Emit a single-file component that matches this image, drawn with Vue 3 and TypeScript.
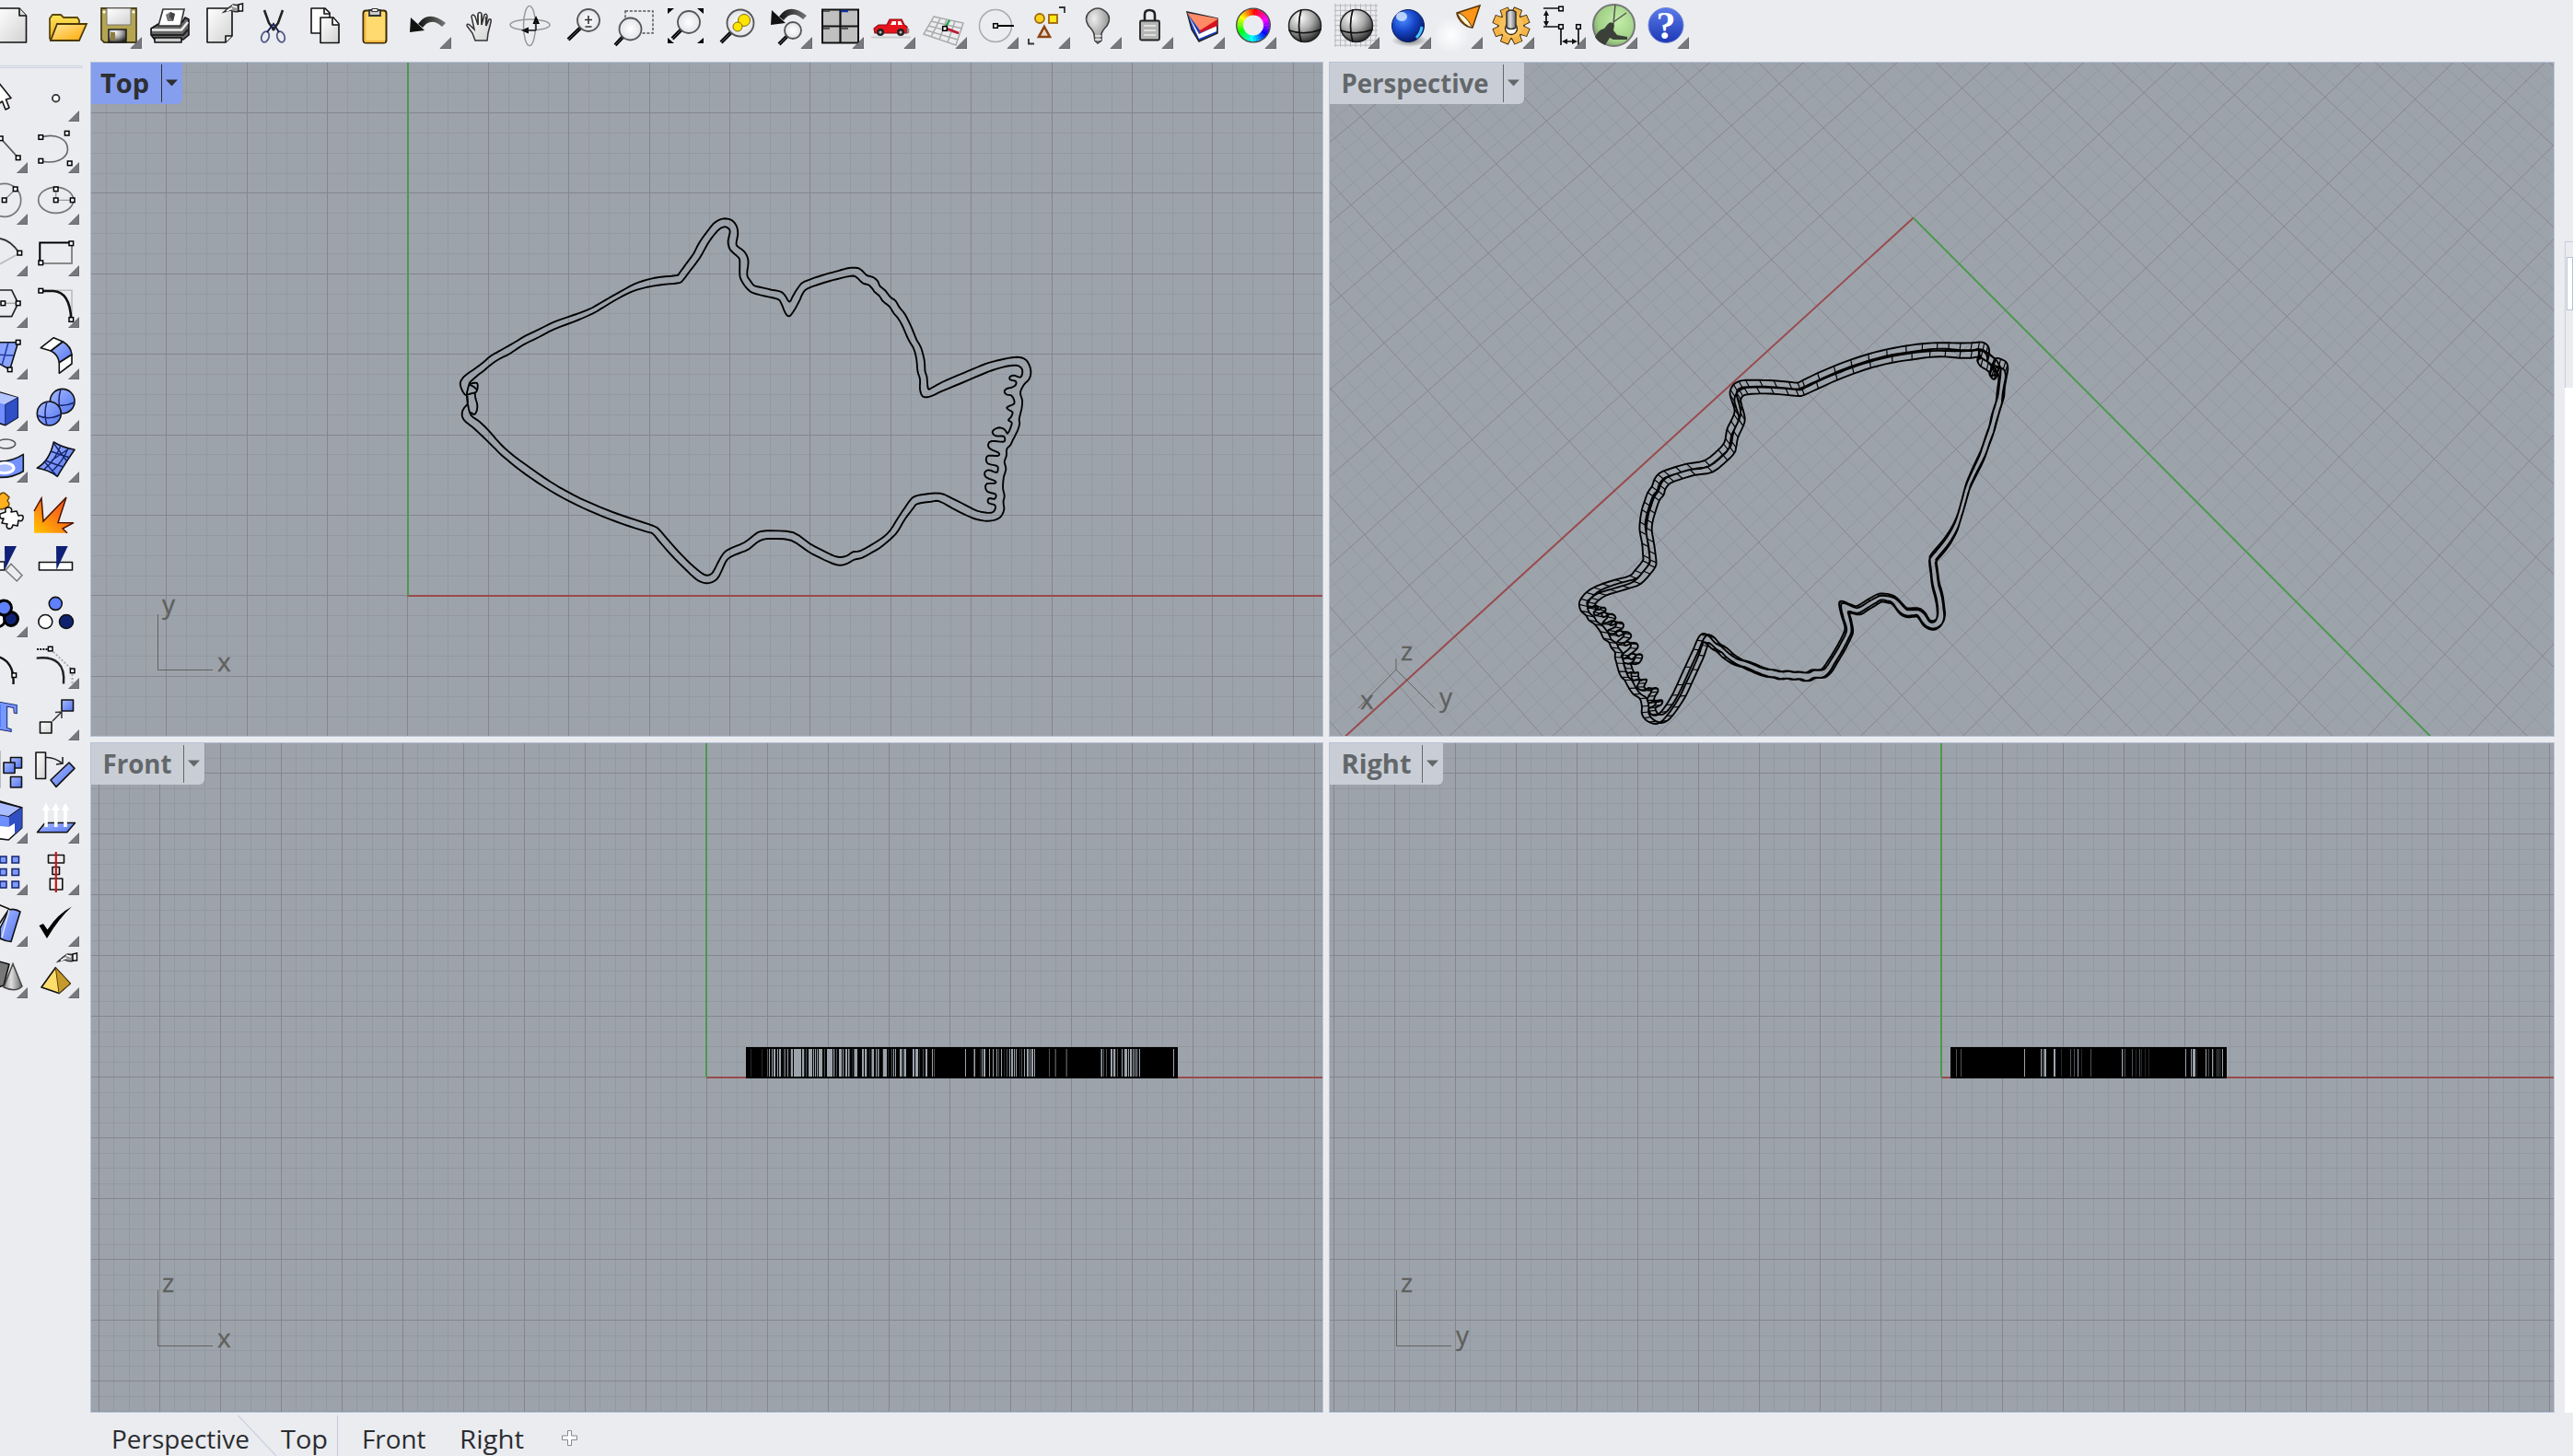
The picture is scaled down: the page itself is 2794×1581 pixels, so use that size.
<script setup lang="ts">
type Pt = [number, number]

interface Axis { lines: string; labels: { t: string; x: number; y: number }[] }
interface View {
  name: string
  active: boolean
  box: string
  minor: string
  major: string
  red: string
  green: string
  outline: string
  iso: string
  width: number
  textLen: number
  axis: Axis
  bars: { x: number; w: number; o: number }[]
  body: { x: number; w: number } | null
}

/* ---------- fish outline (sheet units: 2.3758 across, 3 down per pixel) ---------- */
const outerRaw = `60,627 52,612 47,592 50,578 60,563 80,545 105,522 125,500 150,482 185,457 215,434 250,413 290,388 340,366 380,347 402,332 430,311 460,290 495,266 530,251 560,243 605,237 612,230 630,199 648,168 660,139 672,115 688,88 700,69 714,57 729,52 745,56 756,68 762,85 763,105 759,135 766,146 780,160 788,178 790,198 787,235 794,252 805,270 820,275 850,284 873,290 884,301 896,323 905,305 918,278 930,261 950,250 985,235 1020,223 1050,213 1072,213 1084,222 1096,237 1112,243 1124,256 1130,272 1144,287 1156,307 1170,320 1180,341 1193,361 1204,387 1216,421 1224,446 1234,468 1240,490 1245,520 1246,548 1251,570 1254,606 1264,603 1290,585 1330,563 1370,542 1405,524 1440,512 1470,505 1490,504 1506,512 1516,532 1519,556 1514,576 1502,592 1492,618 1497,645 1495,672 1489,705 1490,720 1485,742 1474,770 1466,790 1457,803 1456,825 1451,845 1455,868 1449,895 1447,930 1451,955 1448,975 1450,1000 1442,1022 1428,1033 1405,1037 1380,1032 1355,1020 1320,998 1283,973 1262,974 1227,981 1216,995 1195,1030 1176,1070 1158,1095 1130,1124 1110,1139 1084,1157 1064,1163 1045,1176 1027,1181 1008,1176 975,1157 945,1137 900,1100 850,1095 827,1098 812,1108 790,1130 765,1143 745,1154 733,1168 723,1195 713,1220 702,1233 685,1240 667,1235 650,1221 620,1185 590,1146 560,1103 543,1078 528,1072 480,1053 430,1030 380,1004 330,974 280,939 230,898 190,861 155,824 130,793 105,762 80,733 62,715 53,700 52,682 58,667 66,655 65,630`
const innerRaw = `72,585 90,565 110,545 130,524 150,508 175,492 210,463 250,438 290,412 340,388 388,362 420,338 455,312 490,290 530,275 570,267 610,262 622,252 640,222 665,180 685,135 700,108 715,87 728,79 738,83 743,95 738,125 741,148 750,162 764,178 768,190 768,235 773,255 785,277 800,293 830,304 865,314 875,328 886,360 895,370 905,358 920,325 930,298 943,280 985,261 1020,249 1055,239 1068,242 1085,262 1100,268 1110,280 1116,291 1128,304 1138,322 1154,338 1165,360 1176,376 1188,402 1198,432 1208,457 1217,476 1224,510 1227,550 1233,575 1233,608 1238,628 1247,634 1265,629 1290,614 1340,588 1390,561 1420,546 1450,535 1475,530 1489,533 1497,545 1496,562 1490,569 1475,563 1465,568 1466,577 1480,582 1480,594 1470,602 1457,606 1451,615 1456,625 1468,628 1475,640 1476,655 1466,661 1457,668 1462,675 1472,683 1468,698 1461,709 1470,717 1466,735 1459,752 1452,740 1440,733 1426,738 1420,748 1428,760 1448,761 1452,770 1448,779 1418,777 1409,788 1414,802 1436,815 1434,825 1412,824 1404,832 1408,850 1432,858 1434,870 1430,879 1410,871 1400,880 1404,895 1427,907 1426,914 1406,916 1402,928 1408,942 1428,950 1426,965 1412,963 1408,972 1412,980 1426,985 1427,998 1420,1009 1405,1010 1380,1004 1350,985 1317,964 1285,947 1245,950 1222,956 1210,966 1195,992 1175,1030 1157,1066 1140,1088 1115,1109 1080,1134 1060,1138 1045,1150 1027,1155 1010,1150 985,1135 950,1112 907,1075 850,1069 820,1072 805,1083 780,1107 745,1126 728,1140 715,1165 703,1195 695,1209 683,1214 668,1205 640,1175 610,1137 580,1094 560,1065 545,1053 500,1034 440,1008 390,982 340,953 280,910 230,866 185,825 150,785 120,742 95,712 75,693 67,660 64,625 68,600 72,585`
const mouthRaw = [
  '60,627 75,622 88,617 92,600 90,588 80,588 72,593 82,600 90,610',
  '85,618 86,635 91,660 89,680 83,690 74,683',
]

const parse = (s: string): Pt[] => s.split(' ').map((p) => {
  const [a, b] = p.split(',').map(Number)
  return [480 + a / 2.3758, 220 + b / 3]
})

/** Catmull-Rom subdivision keeps the traced curve smooth. */
function smooth(p: Pt[], n = 3): Pt[] {
  const out: Pt[] = []
  for (let i = 0; i < p.length - 1; i++) {
    const a = p[Math.max(0, i - 1)], b = p[i], c = p[i + 1], d = p[Math.min(p.length - 1, i + 2)]
    for (let k = 0; k < n; k++) {
      const t = k / n, t2 = t * t, t3 = t2 * t
      const f = (j: 0 | 1) => 0.5 * (2 * b[j] + (c[j] - a[j]) * t + (2 * a[j] - 5 * b[j] + 4 * c[j] - d[j]) * t2 + (3 * b[j] - a[j] - 3 * c[j] + d[j]) * t3)
      out.push([f(0), f(1)])
    }
  }
  out.push(p[p.length - 1])
  return out
}
const toPath = (p: Pt[]) => 'M' + p.map((q) => q[0].toFixed(1) + ' ' + q[1].toFixed(1)).join('L')

const rawCurves = [outerRaw, innerRaw, ...mouthRaw].map(parse)
const curves = rawCurves.map((c) => smooth(c))

/* ---------- parallel views ---------- */
function ortho(ox: number, oy: number, step: number, x0: number, y0: number, x1: number, y1: number) {
  let minor = '', major = ''
  const q = step / 4
  for (let i = Math.ceil((x0 - ox) / q); ox + i * q < x1; i++) {
    const s = `M${Math.floor(ox + i * q) + 0.5} ${y0}V${y1}`
    if (i % 4) minor += s; else major += s
  }
  for (let i = Math.ceil((y0 - oy) / q); oy + i * q < y1; i++) {
    const s = `M${x0} ${Math.floor(oy + i * q) + 0.5}H${x1}`
    if (i % 4) minor += s; else major += s
  }
  return { minor, major }
}

/* ---------- perspective view ---------- */
function project(u: number, v: number, z = 0): Pt {
  const d = 1 - 0.00733 * u - 0.0062 * v - 0.0468 * z
  return [(-66.92 * u + 36.5 * v - 97.2 * z + 2077.7) / d, (45.44 * u + 48.05 * v - 34.6 * z + 236.6) / d]
}
const lift = (p: Pt, z: number): Pt => project((p[0] - 442.5) / 87.4, (646.6 - p[1]) / 87.4, z)
function perspGrid() {
  let minor = '', major = ''
  for (let i = -120; i <= 80; i++) {
    const a = toPath([project(i / 4, -30), project(i / 4, 20)])
    const b = toPath([project(-30, i / 4), project(20, i / 4)])
    if (i % 4) minor += a + b; else major += a + b
  }
  return { minor, major }
}
const perspOutline = curves.map((c) => toPath(c.map((p) => lift(p, 0))) + toPath(c.map((p) => lift(p, 0.5)))).join('')
const perspIso = rawCurves.map((c) => c.map((p) => toPath([lift(p, 0), lift(p, 0.5)])).join('')).join('')

/* ---------- side views: gaps between the vertical wall edges ---------- */
const shade: Record<string, number> = { d: 0.25, g: 0.5, '': 1 }
function gaps(s: string, base: number) {
  return s.split(' ').map((t) => {
    const m = /^(\d+)(?:x(\d))?([dg]?)$/.exec(t)!
    return { x: base + +m[1], w: +(m[2] || 1), o: shade[m[3]] }
  })
}
const frontBars = gaps('5d 17d 23g 25 28 30x2 34 36x2 41x2g 43d 45 48d 49x2 52x8 61x2 63d 65g 68x4 73 75 77 79x4 85g 88x6 95 96d 98g 101x3 105 108x2 111 112g 115d 117g 118x3 126x2 129x2 131d 134d 136g 137x2 141 143 144g 148d 149x4 154d 158g 160 162 167x2 169g 170d 171g 172x2 181x2 184x3 188d 192g 195x2 202 204g 238 247g 248 254d 256 258x2 264 268 272 274g 277 280d 283g 286 288x2 291 293 297d 299g 302 305x2 308 310x2 313 329g 335d 336g 347d 348g 385g 386 388g 391g 396x2 399x2 401d 403g 408 411x3 415 417x2 420 422 424 427 464', 810)
const rightBars = gaps('6g 11g 80 98 99d 100d 101g 102x2 112x2 120d 130g 134g 138 142d 152g 186 187d 189g 197g 201d 205g 207d 211d 215d 255 261 263x3 267d 277 280g 284 285d 289g 291g 293d 295', 2118)

const topG = ortho(442.9, 646.9, 87.4, 99, 68, 1436, 799)
const frontG = ortho(767.3, 1169.5, 66, 99, 807, 1436, 1533)
const rightG = ortho(2108.3, 1169.5, 66, 1444, 807, 2773, 1533)
const perG = perspGrid()

const views: View[] = [
  {
    name: 'Top', active: true, box: '99 68 1337 731', ...topG,
    red: 'M442 647H1436', green: 'M443 68V647',
    outline: curves.map(toPath).join(''), iso: '', width: 99, textLen: 53,
    axis: { lines: 'M171.5 667V727.5H231', labels: [{ t: 'y', x: 176, y: 666 }, { t: 'x', x: 236, y: 729 }] },
    bars: [], body: null,
  },
  {
    name: 'Perspective', active: false, box: '1444 68 1329 731', ...perG,
    red: toPath([project(0, 0), project(14, 0)]), green: toPath([project(0, 0), project(0, 14)]),
    outline: perspOutline, iso: perspIso, width: 211, textLen: 160,
    axis: { lines: 'M1516 715V727M1516 727L1475 769M1516 727L1558 769', labels: [{ t: 'z', x: 1521, y: 717 }, { t: 'x', x: 1477, y: 770 }, { t: 'y', x: 1563, y: 767 }] },
    bars: [], body: null,
  },
  {
    name: 'Front', active: false, box: '99 807 1337 726', ...frontG,
    red: 'M767 1170H1436', green: 'M767 807V1170', outline: '', iso: '', width: 123, textLen: 75,
    axis: { lines: 'M171.5 1401V1461.5H231', labels: [{ t: 'z', x: 176, y: 1402.5 }, { t: 'x', x: 236, y: 1463 }] },
    bars: frontBars, body: { x: 810, w: 469 },
  },
  {
    name: 'Right', active: false, box: '1444 807 1329 726', ...rightG,
    red: 'M2108 1170H2773', green: 'M2108 807V1170', outline: '', iso: '', width: 123, textLen: 76,
    axis: { lines: 'M1516.5 1401V1461.5H1576', labels: [{ t: 'z', x: 1521, y: 1402.5 }, { t: 'y', x: 1581, y: 1460 }] },
    bars: rightBars, body: { x: 2118, w: 300 },
  },
]

/* ---------- icons (56 x 56 cells) ---------- */
interface Icon { a: string; m?: boolean }
const K = 'stroke="#111" stroke-width="1.6" stroke-linejoin="round"'
const sq = (...c: number[]) => {
  let s = ''
  for (let i = 0; i < c.length; i += 2) s += `<rect x="${c[i] - 2.3}" y="${c[i + 1] - 2.3}" width="4.6" height="4.6" fill="#fff" stroke="#000" stroke-width="1.5"/>`
  return s
}
const lens = (x: number, y: number, r: number, hx: number, hy: number) => {
  const l = Math.hypot(hx - x, hy - y), ux = (hx - x) / l, uy = (hy - y) / l
  return `<path d="M${x + ux * r} ${y + uy * r}L${hx} ${hy}" stroke="#000" stroke-width="4"/><path d="M${x + ux * r} ${y + uy * r}L${hx} ${hy}" stroke="#666" stroke-width="1"/><circle cx="${x}" cy="${y}" r="${r}" fill="url(#lensG)" stroke="#555" stroke-width="1.8"/>`
}
const hand = (x: number, y: number) => `<g transform="translate(${x} ${y})"><path d="M0 9Q5 4 10 1L16 1.500L17 8Q12 10 7 7Z" fill="#999" stroke="#333" stroke-width="1.4"/><path d="M3 8L9 5M9 2L14 4" stroke="#fff" stroke-width="1.5"/><path d="M16 1L20.500 0V8L16 8Z" fill="#fff" stroke="#111" stroke-width="1.500"/></g>`
const ball = (x: number, y: number, rx: number, ry: number) => `<ellipse cx="${x}" cy="${y}" rx="${rx}" ry="${ry}" fill="url(#ballG)" stroke="#222" stroke-width="1.500"/><path d="M${x - 4} ${y - ry}Q${x - 9} ${y} ${x - 4} ${y + ry}M${x - rx} ${y + 5}Q${x} ${y + 11} ${x + rx} ${y + 4}" fill="none" stroke="#111" stroke-width="1.700"/>`

const undoArrow = (dy: number) => `<path d="M20 ${26 + dy}Q31 ${10 + dy} 50 ${25 + dy}L46 ${29 + dy}Q34 ${18 + dy} 25 ${30 + dy}Z" fill="url(#undoG)"/><path d="M12 ${19 + dy}L11 ${35 + dy}L27 ${33 + dy}Z" fill="#111"/>`

let rays = ''
for (let i = 0; i < 36; i++) {
  const a = (i * 10 - 90) * Math.PI / 180, b = (i * 10 - 79) * Math.PI / 180
  rays += `<path d="M31 27.500L${31 + 18 * Math.cos(a)} ${27.500 + 18 * Math.sin(a)}L${31 + 18 * Math.cos(b)} ${27.500 + 18 * Math.sin(b)}Z" fill="hsl(${360 - i * 10} 100% 50%)"/>`
}
let mesh = ''
for (let i = 0; i < 9; i++) mesh += `M${8 + i * 5.5} 4V51M7 ${6 + i * 5.4}H54`
let teeth = ''
for (let i = 0; i < 8; i++) teeth += `<path d="M26.500 16L27 8.500H35L35.500 16Z" transform="rotate(${i * 45 + 22} 31 28)"/>`

const topIcons: Icon[] = [
  { a: `<path d="M10 9H35L42.500 17V46H10Z" fill="url(#pageG)" ${K}/><path d="M35 9V17H42.500" fill="#ddd" ${K}/>` },
  { a: `<path d="M12 42V20L15 16H24L27 19H42L44 22V30L38 44H14Z" fill="url(#foldA)" stroke="#5a4a10" stroke-width="1.800"/><path d="M20 26H52L44 44H13Z" fill="url(#foldB)" stroke="#4a3a05" stroke-width="1.800"/>` },
  { m: true, a: `<path d="M12 9H50V46H15L12 43Z" fill="#b5a552" stroke="#4a4320" stroke-width="1.800"/><path d="M18 9H44V27H18Z" fill="url(#pageG)" stroke="#777"/><path d="M20 32H39V46H20Z" fill="url(#ballG)" stroke="#222" stroke-width="1.600"/><rect x="22" y="35" width="5" height="9" fill="#8c7c40"/><circle cx="15" cy="13" r="1.500" fill="#fff"/><circle cx="47" cy="13" r="1.500" fill="#fff"/>` },
  { a: `<path d="M10 31L18 26L44 24L47 19L51 21V38L45 43H14L10 38Z" fill="#666" ${K}/><path d="M18 28L23 10H46L42 28Z" fill="#fff" stroke="#333" stroke-width="1.600"/><path d="M26 16L31 13L36 15L34 23L28 23Z" fill="#777"/><path d="M31 13L36 15L34 23L30 18Z" fill="#444"/><path d="M11 32.500H43L50 24" stroke="#eee" stroke-width="2.600" fill="none"/><path d="M10 38H45L50 32" stroke="#222" stroke-width="2" fill="none"/><path d="M14 41H43V46H14Z" fill="#ccc" ${K}/>` },
  { a: `<path d="M15 9H42V39L35 46H15Z" fill="url(#pageG)" ${K}/><path d="M35 46V39H42" fill="#eee" ${K}/>${hand(33, 4)}` },
  { a: `<path d="M21 11L26 25L32 33M41 11L36 25L30 33" stroke="#222" stroke-width="2.600" fill="none"/><ellipse cx="22" cy="40" rx="4" ry="6" transform="rotate(20 22 40)" fill="none" stroke="#555a88" stroke-width="1.800"/><ellipse cx="39" cy="40" rx="4" ry="6" transform="rotate(-20 39 40)" fill="none" stroke="#555a88" stroke-width="1.800"/><path d="M24 35L31 26L37 35" stroke="#1c2350" stroke-width="2" fill="none"/>` },
  { a: `<path d="M16 9H31L36 14V36H16Z" fill="#fff" ${K}/><path d="M30 9V15H36" fill="none" ${K}/><path d="M26 19H40L46 26V46.500H26Z" fill="url(#pageG)" ${K}/><path d="M39 19V27H46" fill="#fff" ${K}/>` },
  { a: `<rect x="16.500" y="11.500" width="25" height="35" rx="3" fill="#ffda6e" stroke="#3a2b08" stroke-width="2"/><path d="M18.500 14V45M18 45H40" stroke="#f5b840" stroke-width="2"/><path d="M23 11H35V17H23Z" fill="#ccc" stroke="#333" stroke-width="1.800"/><rect x="26" y="9.500" width="6" height="3" fill="#fff" stroke="#333"/>` },
  { m: true, a: undoArrow(0) },
  { a: `<path d="M26 44L23 36L17 28Q17 25 20 27L25 32L22 18Q23 14 26 18L29 27L29 15Q31 12 33 15V27L36 16Q39 14 39 18L38 28L41 21Q44 20 43 24L40 36L39 44Z" fill="url(#pageG)" stroke="#333" stroke-width="1.500"/><path d="M29 16V27M33 16V27M37.500 18V28" stroke="#333" stroke-width="1.200"/>` },
  { a: `<ellipse cx="29.500" cy="27" rx="21.500" ry="6" fill="none" stroke="#999" stroke-width="1.500"/><ellipse cx="29" cy="28" rx="6.500" ry="21.500" fill="none" stroke="#999" stroke-width="1.500"/><path d="M36 17L32.500 26H40ZM20 33L28 29.500V36.500Z" fill="#000"/><path d="M22 33H36M36 22V33" stroke="#222" stroke-width="1.500"/>` },
  { a: lens(37, 22, 12, 15, 43) + `<path d="M37 17V26M33 21.500H41M33.500 29H40.500" stroke="#333" stroke-width="1.600"/>` },
  { a: `<rect x="21" y="12" width="30" height="24" fill="none" stroke="#555" stroke-width="1.500" stroke-dasharray="3 1.800"/>` + lens(26.500, 31.500, 12, 10, 49) },
  { a: `<path d="M11 9H18L11 15ZM50 9H43L50 15ZM11 47H18L11 41ZM50 47H43L50 41Z" fill="#000"/>` + lens(34, 24, 12, 16, 42) },
  { a: lens(34, 25, 14.500, 13, 46) + `<circle cx="38" cy="22" r="6.500" fill="#ffe400" stroke="#7a6a10"/><circle cx="31" cy="29" r="5" fill="#ffe400" stroke="#7a6a10"/>` },
  { m: true, a: undoArrow(-8) + lens(35, 33, 9, 20, 48) },
  { m: true, a: `<rect x="11" y="10.500" width="39" height="36" fill="#c0c0c0" stroke="#111" stroke-width="2"/><path d="M30.500 10V47M11 28.500H50" stroke="#111" stroke-width="2.200"/><path d="M12 12H19M31 31H39M12 31H19" stroke="#555" stroke-width="2"/><path d="M31 12H39" stroke="#14309a" stroke-width="2.500"/>` },
  { m: true, a: `<path d="M8 40.500H51" stroke="#ccc" stroke-width="2"/><path d="M11 31L16 27H25L28 21H41L44 27L47 29V36H12Z" fill="#e8141c" stroke="#8c1015" stroke-width="1.200"/><path d="M29 27L31 23H35V27ZM37 27V23H40L42 27Z" fill="#fff"/><circle cx="18" cy="35" r="4" fill="#222"/><circle cx="40" cy="35" r="4" fill="#222"/><circle cx="18" cy="35" r="1.500" fill="#bbb"/><circle cx="40" cy="35" r="1.500" fill="#bbb"/><path d="M48 31V36" stroke="#888" stroke-width="2.500"/>` },
  { m: true, a: `<path d="M20 18L52 25L44 49L9 37ZM27 20L17 40M34 21L26 43M43 23L35 46M17 23L51 31M14 28L49 37M12 33L46 43" fill="none" stroke="#aaa" stroke-width="1.500"/><path d="M33 29L37 22" stroke="#1fa34a" stroke-width="2.500"/><path d="M34 31L47 36" stroke="#c1172b" stroke-width="2.500"/>${sq(32, 31)}` },
  { m: true, a: `<ellipse cx="31" cy="28" rx="17.500" ry="17.500" fill="none" stroke="#aaa" stroke-width="1.500"/><path d="M31 28H51" stroke="#000" stroke-width="2"/>${sq(31, 28)}` },
  { m: true, a: `<path d="M44 8H50V14M11 42V47.500H17" fill="none" stroke="#333" stroke-width="1.800"/><circle cx="23" cy="20" r="5" fill="#ffd21a" stroke="#9b6b10" stroke-width="1.800"/><rect x="33" y="16" width="9" height="9" fill="#ffe81a" stroke="#a0640c" stroke-width="1.800"/><path d="M28 29L34 40H22Z" fill="#ead7cb" stroke="#8b4513" stroke-width="2.600"/>` },
  { m: true, a: `<path d="M26 37Q25 33 20 28Q15 20 20 14Q30 4 40 14Q45 20 40 28Q35 33 34 37L34 44L30 47L27 44Z" fill="url(#bulbG)" stroke="#444" stroke-width="1.700"/><path d="M27 39H34M27 43H34" stroke="#eee" stroke-width="1.500"/>` },
  { m: true, a: `<path d="M25 23V16Q25 11 30 11Q36 11 36 16V23" fill="none" stroke="#222" stroke-width="2.600"/><rect x="20" y="22.500" width="21" height="21" rx="1.500" fill="#b5b5b5" stroke="#222" stroke-width="1.800"/><path d="M24 28H37M24 33H37M24 38H37" stroke="#eee" stroke-width="1.500"/>` },
  { m: true, a: `<path d="M15 13L48 20V36L28 45L20 32Z" fill="#1b3fc0" stroke="#222" stroke-width="1.500"/><path d="M16 16L28 37L47 28V34L28 42Z" fill="#fff"/><path d="M15 14L48 20V26L29 33Z" fill="#ff8a66"/><path d="M29 33L48 21V28L28 36Z" fill="#d9121c"/>` },
  { m: true, a: rays + `<circle cx="31" cy="27.500" r="11" fill="#ebecf0"/><circle cx="31" cy="27.500" r="18.300" fill="none" stroke="#444" stroke-width="1.300"/>` },
  { a: ball(31, 28, 17.500, 17.500) },
  { m: true, a: `<path d="${mesh}" stroke="#b8b8bc" stroke-width="1" fill="none"/>` + ball(31, 28, 17.500, 17.500) },
  { m: true, a: `<ellipse cx="33" cy="44" rx="20" ry="7" fill="url(#shadeG)"/><circle cx="31" cy="28" r="17.500" fill="url(#blueBall)" stroke="#0a1c5c"/><ellipse cx="24" cy="18" rx="6" ry="5" fill="#cfe2ff" opacity=".85"/><path d="M40 41Q45 36 46 29" stroke="#49c4ff" stroke-width="3" fill="none"/>` },
  { m: true, a: `<circle cx="22" cy="38" r="20" fill="url(#glowG)"/><path d="M28 14L53 6L45 30Q39 30 33 24Q28 18 28 14Z" fill="#ff9518" stroke="#553408" stroke-width="1.500"/><path d="M28 14Q36 14 45 30Q36 29 28 14Z" fill="#fff2cf" stroke="#553408"/>` },
  { m: true, a: `<g fill="#f3b54a" stroke="#3b2606" stroke-width="1.700">${teeth}<circle cx="31" cy="28" r="14"/></g><g fill="#f3b54a">${teeth}</g><circle cx="31" cy="28" r="13" fill="#f6c15c"/><circle cx="31" cy="31" r="6.500" fill="#fff" stroke="#3b2606" stroke-width="1.300"/><path d="M26 13Q31 9 36 13V30Q31 33 26 30Z" fill="url(#cylG)" stroke="#333" stroke-width="1.500"/>` },
  { m: true, a: `<path d="M10 9H27M10 29H27M29 31V49M48 31V49M13 14V26M32 45H45" stroke="#111" stroke-width="1.700"/><path d="M13 11L10 17H16ZM13 29L10 23H16ZM30 45L36 42V48ZM47 45L41 42V48Z" fill="#111"/>${sq(29, 9.500, 29, 29, 48, 29)}` },
  { m: true, a: `<circle cx="30.500" cy="27.500" r="22.500" fill="url(#greenG)" stroke="#777" stroke-width="2"/><path d="M32 5L30 26M30 24L44 14" stroke="#555" stroke-width="1.500"/><path d="M10 40Q14 32 20 31L24 26Q28 22 31 27L30 33L34 38L45 40V43L30 43L26 41L21 49Q12 45 10 40Z" fill="#3b4038"/>` },
  { m: true, a: `<circle cx="31" cy="27.500" r="19" fill="url(#helpG)" stroke="#7488d8"/><text x="31" y="42" text-anchor="middle" font-family="Liberation Serif,serif" font-weight="700" font-size="42" fill="#fff">?</text>` },
]

const B = '#7f9bff'
const sideIcons: Icon[] = [
  { a: `<path d="M20 8L38 30.500L32.500 32L36 41L32 43L28.500 34L20 40Z" fill="#fff" ${K}/>` },
  { m: true, a: `<circle cx="30.700" cy="30.700" r="3.800" fill="#fff" stroke="#333" stroke-width="1.800"/>` },
  { m: true, a: `<path d="M26.500 18L45.500 39" stroke="#555" stroke-width="1.800"/>${sq(26.700, 18.300, 45.700, 39.300)}` },
  { m: true, a: `<path d="M14.300 17C32 12 43.500 20 43.500 30S30 47 14.300 42.700" fill="none" stroke="#666" stroke-width="1.600"/>${sq(14.300, 17, 42.700, 12.700, 14.300, 42.700, 45.700, 45.300)}` },
  { m: true, a: `<circle cx="30.700" cy="29.300" r="18" fill="none" stroke="#777" stroke-width="1.700"/><path d="M30.700 29.300L42.700 17.300" stroke="#777" stroke-width="1.200"/>${sq(30.700, 29.300, 42.700, 17.300)}` },
  { m: true, a: `<ellipse cx="30.700" cy="29.300" rx="19" ry="14" fill="none" stroke="#777" stroke-width="1.700"/><path d="M30.700 17V29.300H49" fill="none" stroke="#999" stroke-width="1.300"/>${sq(30.700, 29.300, 30.700, 17.300, 48.700, 29.300)}` },
  { m: true, a: `<path d="M26 15Q38 17 47 31" fill="none" stroke="#333" stroke-width="1.800"/><path d="M47 31L26 42.700" stroke="#bbb" stroke-width="1.600"/>${sq(47.300, 30.700)}` },
  { m: true, a: `<path d="M13.300 42V19.500H48" fill="none" stroke="#000" stroke-width="2"/><path d="M48 19.500V42H13.300" fill="none" stroke="#888" stroke-width="2"/>${sq(47.300, 20.300, 14.300, 41.300)}` },
  { m: true, a: `<path d="M20 15H38.700L45.700 29.300L38.700 43.700H20" fill="none" stroke="#222" stroke-width="1.700"/><path d="M29 29.300H45" stroke="#aaa" stroke-width="1.500"/>${sq(29.300, 29.300, 45.700, 29.300)}` },
  { m: true, a: `<path d="M14 15.300H48V47" fill="none" stroke="#bbb" stroke-width="1.600"/><path d="M14.300 16H28Q46 17 47.300 47" fill="none" stroke="#111" stroke-width="2.600"/>${sq(14.300, 15.700, 47.300, 47)}` },
  { m: true, a: `<path d="M20 15.700H45.700L36.700 45.300L20 36Z" fill="#8ba4ff" ${K}/><path d="M35 16L28 41M22 29L41 30" stroke="#223a9a" stroke-width="1.500"/>${sq(45.700, 15.700, 36.700, 45.300)}` },
  { m: true, a: `<path d="M14.300 21.700L28.300 10.700L38.300 15L25.300 25Z" fill="#fff" ${K}/><path d="M38.300 15Q47 20 48 29L34.300 37.700Q33 29 25.300 25Z" fill="url(#blueG)" ${K}/><path d="M34.300 37.700V49.300L48 39V29Z" fill="#fff" ${K}/>` },
  { m: true, a: `<path d="M20 13L26 14L45.300 19.700V41.300L31.700 49.700L20 46Z" fill="#6f8eff" ${K}/><path d="M20 13L45.300 19.700L31.700 27.300L20 24Z" fill="#b5c5ff"/><path d="M31.700 27.300L45.300 19.700V41.300L31.700 49.700Z" fill="#2f4fc4" stroke="#1a2a70"/>` },
  { m: true, a: `<circle cx="37.700" cy="23.700" r="13.300" fill="url(#blueG)" ${K}/><path d="M36 10.500Q32 23 36 37M24.500 26Q38 31 51 25" fill="none" stroke="#17266b" stroke-width="1.500"/><circle cx="23.300" cy="37" r="13" fill="url(#blueG)" ${K}/><path d="M21 24Q17 37 21 50M10.500 39Q23 45 36 38" fill="none" stroke="#17266b" stroke-width="1.500"/>` },
  { m: true, a: `<ellipse cx="32.700" cy="14" rx="10" ry="5" fill="none" stroke="#555" stroke-width="1.500"/><path d="M20 33Q38 34 51.300 25.300V43.700Q38 52 20 50Z" fill="#7391ff" ${K}/><ellipse cx="31" cy="40.300" rx="10" ry="5.500" fill="#a9bcff" stroke="#fff" stroke-width="3"/>` },
  { m: true, a: `<path d="M28.300 12Q38 18 51 20.300Q42 33 32.300 49.300Q22 42 10.300 40.300Q24 32 28.300 12Z" fill="url(#blueG)" ${K}/><path d="M36 15.500Q30 32 17.500 42M44 19Q37 35 25 45M25 22Q36 26 46 29M19 32Q29 36 39 39M28 13L42 32M18 33L31 48M45 19L26 32" fill="none" stroke="#14246c" stroke-width="1.400"/>` },
  { a: `<path d="M20 14L26 13Q29 9 33 13L36 16L34 20Q38 23 34 27L28 29L20 28Z" fill="#ffb01f" stroke="#6b4806" stroke-width="1.500"/><path d="M26 34L32 32Q31 26 36 27Q40 28 38 32L44 31L46 36Q52 34 51 39Q50 43 46 41L45 47L40 46Q39 51 35 50Q32 48 34 45L28 44L30 39Q25 40 26 34Z" fill="#fff" ${K}/>` },
  { a: `<path d="M7 31L15 17L17 42L42 16L33 43.500L50 43.700L38 50L43 54.700H7Z" fill="url(#fireG)"/><path d="M7 31L15 17L17 42L42 16L33 43.500L50 43.700L38 50L43 54.700" fill="none" stroke="#4a1404" stroke-width="1.500"/>` },
  { a: `<rect x="14" y="30" width="17" height="9" fill="#fff" ${K}/><path d="M38 32.300L50 44.700L44.300 51L32 39.200Z" fill="none" stroke="#777" stroke-width="1.500"/><path d="M31 13H44L31.300 38.500Z" fill="#0f2077"/>` },
  { a: `<rect x="12.500" y="30.500" width="36" height="8.500" fill="#fff" ${K}/><path d="M31 13H43.700L31.300 39Z" fill="#0f2077"/>` },
  { m: true, a: `<circle cx="24" cy="37" r="7.500" fill="#fff" stroke="#000" stroke-width="3"/><circle cx="38" cy="36" r="7.500" fill="#10226f" stroke="#000" stroke-width="3"/><circle cx="30.500" cy="24" r="8" fill="#5f80ff" stroke="#000" stroke-width="3"/>` },
  { a: `<circle cx="30.300" cy="19.400" r="7" fill="#5f80ff" ${K}/><circle cx="19.300" cy="39" r="7.500" fill="#fff" ${K}/><circle cx="42" cy="39" r="7.500" fill="#10226f" ${K}/>` },
  { a: `<path d="M24 21Q42 27 40.500 51" fill="none" stroke="#111" stroke-width="2.400"/>${sq(41.300, 41.200)}` },
  { m: true, a: `<path d="M9.700 22.600Q42 19 39 50.500" fill="none" stroke="#222" stroke-width="2.400"/><path d="M10 13H22" stroke="#111" stroke-width="1.800" stroke-dasharray="2 1.200"/><path d="M28 16L47 34M48.500 40V52" stroke="#aaa" stroke-width="2" stroke-dasharray="2 2"/>${sq(24.700, 12.600, 48.700, 36.400)}` },
  { a: `<text x="16" y="41" font-family="Liberation Serif,serif" font-weight="700" font-size="44" fill="#7b97ff" stroke="#16266e" stroke-width="2" paint-order="stroke" transform="skewY(10) translate(-1 -2)">T</text>` },
  { m: true, a: `<rect x="37" y="12" width="12.500" height="12" fill="url(#blueG)" ${K}/><rect x="13.500" y="36" width="12.500" height="12" fill="url(#pageG)" ${K}/><path d="M27 35L37 25M30 25.500L37 25V32" fill="none" stroke="#333" stroke-width="1.500"/>` },
  { a: `<path d="M22 12H26V51H22" fill="none" stroke="#aaa" stroke-width="1.500"/><g fill="url(#blueG)" ${K}><rect x="37.500" y="18.500" width="12" height="11.500"/><rect x="30" y="24" width="12" height="11.500"/><rect x="37.500" y="39.500" width="12" height="11.500"/></g>` },
  { a: `<rect x="9" y="13" width="10.500" height="28.500" fill="url(#pageG)" ${K}/><path d="M20 18.500Q29 18 37.500 25M31 26L38 25V18" fill="none" stroke="#222" stroke-width="1.600"/><path d="M45 24L51 30.400L31 50.400L25 43Z" fill="url(#blueG)" ${K}/>` },
  { m: true, a: `<path d="M18 9L26 10L49.700 17V39L35.300 52L18 50Z" fill="#fff" ${K}/><path d="M18 9L49.700 17L35.500 27L18 24Z" fill="#a9bcff" ${K}/><path d="M18 24L35.500 27V38L18 36Z" fill="#6f8eff"/><path d="M35.500 27L49.700 17V39L42 46V34L35.500 38Z" fill="#2f4fc4"/>` },
  { m: true, a: `<path d="M19 33.500H51.500L42.700 43.700H10.500Z" fill="url(#blueG)" ${K}/><path d="M20 38V18M30.700 38V18M41 38V18" stroke="#fff" stroke-width="3.600"/><path d="M15.500 20L20 12L24.500 20ZM26 20L30.700 12L35 20ZM36.500 20L41 12L45.500 20Z" fill="#fff"/>` },
  { m: true, a: `<g fill="${B}" stroke="#16266e" stroke-width="1.500"><rect x="26" y="14" width="7" height="7"/><rect x="39" y="14" width="7.500" height="7"/><rect x="26" y="27.500" width="7" height="7"/><rect x="39" y="27.500" width="7.500" height="7"/><rect x="26" y="41" width="7" height="7"/><rect x="39" y="41" width="7.500" height="7"/></g>` },
  { m: true, a: `<g fill="#eee" ${K}><rect x="22.500" y="12.500" width="17" height="8.500"/><rect x="27" y="25.500" width="7.500" height="8"/><rect x="24.300" y="38" width="13.500" height="12"/></g><path d="M30.800 9V53" stroke="#c8141c" stroke-width="2.200"/>` },
  { m: true, a: `<path d="M24 10L36 15L30 24L22 36V12Z" fill="#eee" ${K}/><path d="M36 16Q42 14 48 18L38 50.500Q32 50 26 47V36Z" fill="url(#blueG)" ${K}/><path d="M36 16L28 46" stroke="#dfe6ff" stroke-width="1.500"/>` },
  { m: true, a: `<path d="M12.500 33L17 31L21.500 37.500Q33 20 48 12.500Q34 25 21 47Z" fill="#000"/>` },
  { m: true, a: `<path d="M18 14L36 19L30 42L18 46Z" fill="#777" ${K}/><path d="M40 18.600L50 43Q43 50 30 44Z" fill="url(#cylG)" stroke="#444" stroke-width="1.500"/>` },
  { m: true, a: `<path d="M30.300 22.700L46.300 40L34 50.600L15 44Z" fill="#ffdd6b" ${K}/><path d="M30.300 22.700L46.300 40L34 50.600Z" fill="#c49a2c" stroke="#5a4207"/>${hand(33, 7)}` },
]
const MARK = `<path d="M56 40.500V52.500H44Z" fill="#77797e" stroke="#55575b" stroke-width=".8"/>`
const SIDE_MARK = `<path d="M56 44.500V56H44.500Z" fill="#77797e" stroke="#55575b" stroke-width=".8"/>`

const tabs = [
  { t: 'Perspective', x: 121, len: 150 },
  { t: 'Top', x: 305, len: 51 },
  { t: 'Front', x: 393, len: 69.5 },
  { t: 'Right', x: 499, len: 70 },
]
</script>

<template>
  <div class="app">
    <svg class="defs" width="0" height="0">
      <defs>
        <linearGradient id="pageG" x1="0" y1="0" x2="1" y2="1"><stop offset="0" stop-color="#fff" /><stop offset="1" stop-color="#d2d2d2" /></linearGradient>
        <linearGradient id="foldA" x1="0" y1="0" x2="0" y2="1"><stop offset="0" stop-color="#ffe65a" /><stop offset="1" stop-color="#e8a51a" /></linearGradient>
        <linearGradient id="foldB" x1="0" y1="0" x2="1" y2="1"><stop offset="0" stop-color="#ffe9a0" /><stop offset="1" stop-color="#ffa800" /></linearGradient>
        <linearGradient id="undoG"><stop offset="0" stop-color="#111" /><stop offset="1" stop-color="#777" /></linearGradient>
        <linearGradient id="blueG" x1="0" y1="0" x2="1" y2="1"><stop offset="0" stop-color="#a8bbff" /><stop offset="1" stop-color="#5274f0" /></linearGradient>
        <linearGradient id="cylG"><stop offset="0" stop-color="#888" /><stop offset=".4" stop-color="#e0e0e0" /><stop offset="1" stop-color="#666" /></linearGradient>
        <linearGradient id="fireG" x1="1" y1="0" x2="0" y2="1"><stop offset="0" stop-color="#f0431c" /><stop offset=".5" stop-color="#fb7a14" /><stop offset="1" stop-color="#ffc400" /></linearGradient>
        <linearGradient id="helpG" x1="0" y1="0" x2="0" y2="1"><stop offset="0" stop-color="#5b7bea" /><stop offset="1" stop-color="#1c37b4" /></linearGradient>
        <radialGradient id="lensG"><stop offset="0" stop-color="#fff" /><stop offset="1" stop-color="#e2e3e8" /></radialGradient>
        <radialGradient id="ballG" cx=".35" cy=".25" r=".8"><stop offset="0" stop-color="#fff" /><stop offset=".5" stop-color="#aaa" /><stop offset="1" stop-color="#222" /></radialGradient>
        <radialGradient id="bulbG" cx=".35" cy=".3" r=".7"><stop offset="0" stop-color="#eee" /><stop offset="1" stop-color="#8c8c8c" /></radialGradient>
        <radialGradient id="blueBall" cx=".35" cy=".3" r=".75"><stop offset="0" stop-color="#4f8cff" /><stop offset=".5" stop-color="#1546c8" /><stop offset="1" stop-color="#061560" /></radialGradient>
        <radialGradient id="greenG" cx=".6" cy=".4" r=".7"><stop offset="0" stop-color="#c4edaa" /><stop offset=".7" stop-color="#9fcf86" /><stop offset="1" stop-color="#6d8f60" /></radialGradient>
        <radialGradient id="shadeG"><stop offset="0" stop-color="#777" /><stop offset="1" stop-color="#777" stop-opacity="0" /></radialGradient>
        <radialGradient id="glowG"><stop offset="0" stop-color="#fff" /><stop offset="1" stop-color="#fff" stop-opacity="0" /></radialGradient>
      </defs>
    </svg>

    <header class="toolbar">
      <svg v-for="(i, n) in topIcons" :key="n" class="cell" viewBox="0 0 56 56" fill="none" v-html="i.a + (i.m ? MARK : '')" />
    </header>

    <main class="body">
      <aside class="side">
        <div class="grip" />
        <div class="tools">
          <svg v-for="(i, n) in sideIcons" :key="n" class="cell" viewBox="0 0 56 56" fill="none" v-html="i.a + (i.m ? SIDE_MARK : '')" />
        </div>
      </aside>

      <section class="views">
        <div v-for="v in views" :key="v.name" class="view">
          <svg class="scene" :viewBox="v.box" preserveAspectRatio="none" fill="none">
            <g :shape-rendering="v.name === 'Perspective' ? 'auto' : 'crispEdges'">
              <path :d="v.minor" class="minor" />
              <path :d="v.major" class="major" />
              <path :d="v.red" class="red" />
              <path :d="v.green" class="green" />
            </g>
            <g v-if="v.body" shape-rendering="crispEdges">
              <rect :x="v.body.x" y="1137" :width="v.body.w" height="34" fill="#000" />
              <rect v-for="(b, n) in v.bars" :key="n" :x="b.x" y="1139" :width="b.w" height="30" fill="#9ca3ab" :fill-opacity="b.o" />
            </g>
            <path v-if="v.iso" :d="v.iso" class="iso" />
            <path v-if="v.outline" :d="v.outline" class="outline" />
            <path :d="v.axis.lines" class="axis" />
            <text v-for="l in v.axis.labels" :key="l.t" :x="l.x" :y="l.y" class="axis-text">{{ l.t }}</text>
          </svg>
          <div class="chip" :class="{ active: v.active }" :style="{ width: v.width + 'px' }">
            <svg class="chip-text" height="45" :width="v.width - 24">
              <text :x="v.active ? 10 : 12.5" y="32.500" :textLength="v.textLen" lengthAdjust="spacingAndGlyphs">{{ v.name }}</text>
            </svg>
            <span class="chip-sep" />
            <svg class="chip-arrow" width="13" height="8" viewBox="0 0 13 8"><path d="M0 .5H13L6.500 7.500Z" /></svg>
          </div>
        </div>
      </section>

      <aside class="dock">
        <div class="dock-tab" />
        <div class="dock-box"><div class="dock-field" /></div>
        <div class="dock-page" />
      </aside>
    </main>

    <footer class="tabs">
      <svg width="1436" height="47" viewBox="0 1534 1436 47">
        <path d="M258.500 1537L300 1581" stroke="#ccd3e2" stroke-width="1.300" />
        <path d="M366.500 1537V1581" stroke="#c2cada" />
        <text v-for="t in tabs" :key="t.t" :x="t.x" y="1572.500" :textLength="t.len" lengthAdjust="spacingAndGlyphs">{{ t.t }}</text>
        <path d="M616.500 1553.500H620.500V1559H626.500V1563.500H620.500V1569.500H616.500V1563.500H610.500V1559H616.500Z" fill="#fff" stroke="#85878c" />
      </svg>
    </footer>
  </div>
</template>

<style>
html, body { margin: 0; background: #ebecf0; overflow: hidden; }
</style>

<style scoped>
.app { width: 2794px; height: 1581px; display: flex; flex-direction: column; background: #ebecf0; overflow: hidden; font-family: "Open Sans", "Noto Sans", sans-serif; }
.defs { display: block; flex: none; height: 0; }
.toolbar { height: 67px; flex: none; display: flex; margin-left: -14px; }
.cell { width: 56px; height: 56px; flex: none; display: block; }
.body { height: 1467px; flex: none; display: flex; }
.side { width: 98px; flex: none; overflow: hidden; }
.grip { width: 90px; height: 1px; margin: 4px 0 4px; border-top: 1px solid #cbd2df; border-bottom: 1px solid #cbd2df; }
.grip + .tools { margin-top: -2px; }
.tools { width: 112px; margin-left: -26px; display: grid; grid-template-columns: 56px 56px; grid-auto-rows: 56px; }
.views { display: grid; grid-template-columns: 1339px 1331px; grid-template-rows: 733px 728px; gap: 6px; flex: none; }
.view { position: relative; box-sizing: border-box; border: 1px solid #b7c2d8; background: #9da3ab; overflow: hidden; }
.scene { display: block; width: 100%; height: 100%; }
.minor { stroke: #9299a1; stroke-width: 1; }
.major { stroke: #83868f; stroke-width: 1; }
.red { stroke: #994b4d; stroke-width: 2; }
.green { stroke: #4b994d; stroke-width: 2; }
.outline { stroke: #000; stroke-width: 1.9; stroke-linejoin: round; }
.iso { stroke: #000; stroke-width: 1.2; }
.axis { stroke: #62635f; stroke-width: 1; }
.axis-text { font-size: 28px; fill: #5f605d; stroke: #5f605d; stroke-width: .3; }
.chip { position: absolute; left: 0; top: 0; height: 45px; display: flex; align-items: center; background: #c9ced6; border-bottom-right-radius: 6px; color: #63676a; }
.chip.active { background: #859eee; color: #2d2f33; }
.chip-text { display: block; flex: none; font-size: 29px; font-weight: 700; fill: currentColor; }
.chip-sep { width: 1px; height: 41px; background: currentColor; flex: none; margin-left: 1px; }
.chip-arrow { margin-left: 4px; margin-top: -1px; fill: currentColor; flex: none; }
.dock { width: 9px; margin-left: 11px; flex: none; display: flex; flex-direction: column; }
.dock-tab { height: 195px; }
.dock-box { height: 158px; border-left: 1px solid #c6cddc; border-top: 1px solid #c6cddc; }
.dock-field { height: 56px; margin: 16px 0 0 1px; background: #fff; border: 1px solid #b7c2d8; }
.dock-page { flex: 1; background: #fff; }
.tabs { height: 47px; flex: none; font-size: 28px; fill: #2a2c30; }
.tabs svg { display: block; }
</style>
